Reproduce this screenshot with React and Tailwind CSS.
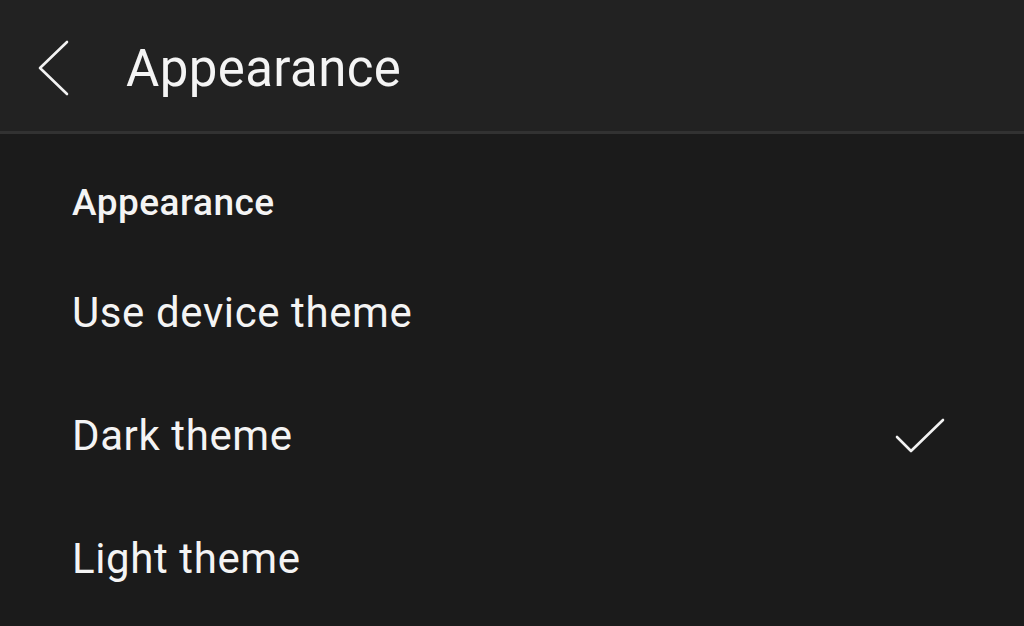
import React from 'react';

const OPTIONS = [
  { id: 'device', label: 'Use device theme' },
  { id: 'dark', label: 'Dark theme' },
  { id: 'light', label: 'Light theme' },
];

const Check = () => (
  <svg width="52" height="40" viewBox="0 0 52 40" fill="none">
    <polyline points="3,21 17,35 49,4" stroke="#f2f2f2" strokeWidth="2.6" strokeLinecap="round" strokeLinejoin="round" />
  </svg>
);

export default function App() {
  const selected = 'dark';

  return (
    <div className="w-full min-h-[626px] bg-[#1b1b1b] text-[#f4f4f4]" style={{ fontFamily: 'Roboto, "Noto Sans", sans-serif' }}>
      {/* Top bar */}
      <div className="h-[134px] flex items-center pt-[5px] bg-[#222222] border-b-[3px] border-[#323232]">
        <button className="ml-[37px] mr-[57px] flex items-center">
          <svg width="32" height="56" viewBox="0 0 32 56" fill="none">
            <polyline points="30,2 3,28 30,54" stroke="#f2f2f2" strokeWidth="2.6" strokeLinecap="round" strokeLinejoin="round" />
          </svg>
        </button>
        <h1 className="text-[51px] leading-none font-normal tracking-[0.4px]">Appearance</h1>
      </div>

      {/* Section */}
      <div className="pl-[72px] pr-[78px]">
        <div className="pt-[47px] mb-[26px] text-[37px] leading-[44px] font-medium tracking-[0.5px]">Appearance</div>
        {OPTIONS.map((opt) => (
          <div key={opt.id} className="h-[123px] flex items-center justify-between">
            <span className="text-[42px] leading-[123px] tracking-[0.6px]">{opt.label}</span>
            {selected === opt.id && <Check />}
          </div>
        ))}
      </div>
    </div>
  );
}
